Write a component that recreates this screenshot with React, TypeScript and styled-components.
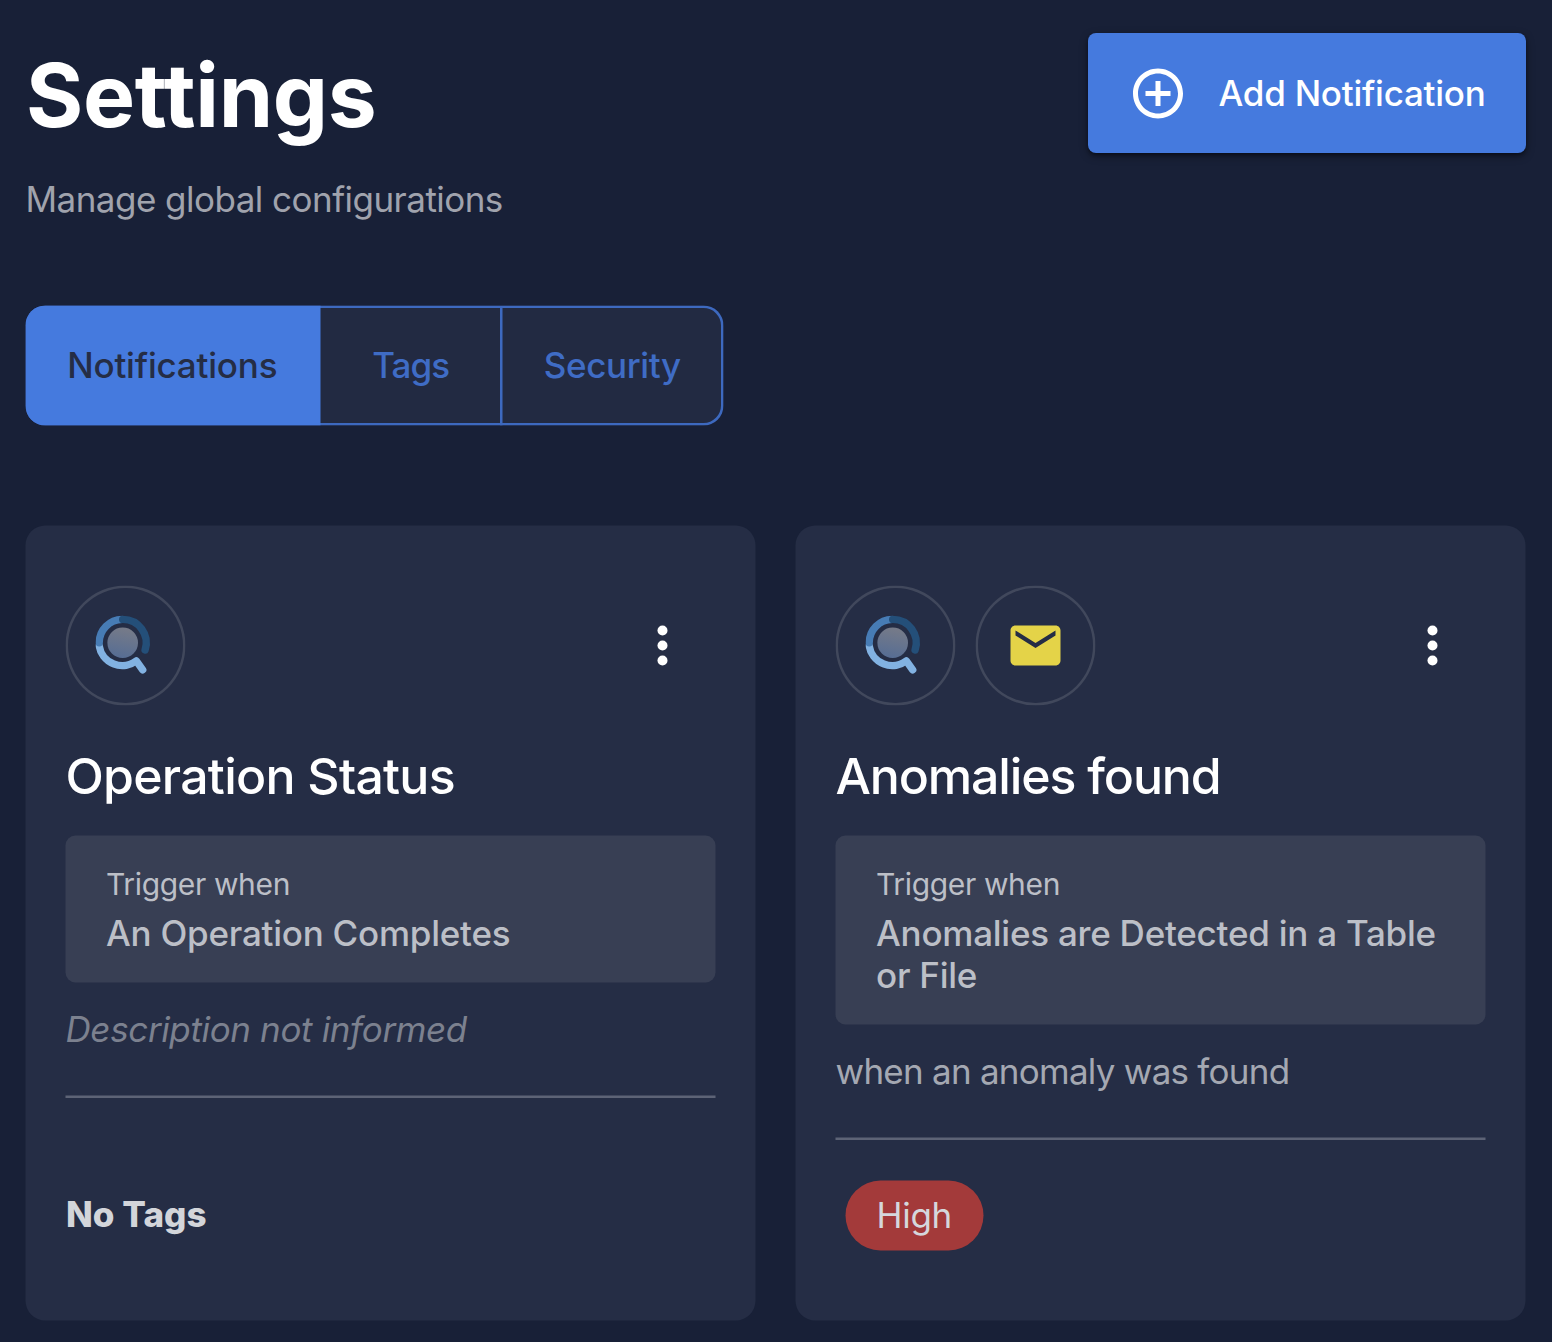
import React from 'react';
import styled, { createGlobalStyle } from 'styled-components';

const GlobalStyle = createGlobalStyle`
  *, *::before, *::after { box-sizing: border-box; }
  html, body { margin: 0; background: #182037; }
  body { font-family: Inter, "Liberation Sans", sans-serif; color: #fff; overflow: hidden; }
  button { font: inherit; margin: 0; cursor: pointer; }
  h1, h2, p { margin: 0; }
`;

const Page = styled.main`
  width: 1552px;
  height: 1342px;
  padding: 33px 26px 0;
  overflow: hidden;
`;

const Header = styled.header`
  display: flex;
  justify-content: space-between;
  align-items: flex-start;
  height: 273px;
`;

const Title = styled.h1`
  padding-top: 10px;
  font-size: 87.5px;
  line-height: 104px;
  font-weight: 700;
  letter-spacing: -0.3px;
  white-space: nowrap;
`;

const Subtitle = styled.p`
  padding-top: 31px;
  margin-left: -0.5px;
  font-size: 35px;
  line-height: 42px;
  letter-spacing: -0.53px;
  color: #a0a3ad;
`;

const AddButton = styled.button`
  display: flex;
  align-items: center;
  gap: 30.5px;
  width: 438px;
  height: 120px;
  padding: 0 0 0 40px;
  border: 0;
  border-radius: 8px;
  background: #457ade;
  color: #fff;
  font-size: 35px;
  font-weight: 500;
  letter-spacing: -0.25px;
  white-space: nowrap;
  box-shadow: 0 3px 8px rgba(0, 0, 0, 0.4), 0 2px 3px rgba(0, 0, 0, 0.3);
`;

const Tabs = styled.nav`
  display: flex;
  width: 697.5px;
  height: 120px;
  overflow: hidden;
  border-radius: 20px;
  background: #222a42;
  box-shadow: inset 0 0 0 2.5px #3d69bf;
  transform: translate(-0.5px, -0.5px);
`;

const Tab = styled.button<{ $width: number; $tracking: number; $active?: boolean; $divided?: boolean }>`
  width: ${(p) => p.$width}px;
  padding: 0 1px 2px 0;
  border: 0;
  font-size: 35px;
  font-weight: 500;
  letter-spacing: ${(p) => p.$tracking}px;
  background: ${(p) => (p.$active ? '#457ade' : 'transparent')};
  color: ${(p) => (p.$active ? '#252d45' : '#3f6cc5')};
  box-shadow: ${(p) => (p.$divided ? 'inset -2.5px 0 0 #3d69bf' : 'none')};
`;

const Cards = styled.section`
  display: grid;
  grid-template-columns: repeat(2, 730px);
  gap: 40px;
  margin-top: 100px;
  transform: translate(-0.5px, -0.5px);
`;

const Card = styled.article`
  height: 795px;
  padding: 60px 40px 0;
  border-radius: 20px;
  background: #252d45;
`;

const CardTop = styled.div`
  display: flex;
  align-items: center;
  justify-content: space-between;
  height: 120px;
  padding-right: 23px;
`;

const Channels = styled.div`
  display: flex;
  gap: 20px;
`;

const Channel = styled.div`
  display: grid;
  place-items: center;
  width: 120px;
  height: 120px;
  border-radius: 50%;
  box-shadow: inset 0 0 0 2.5px #41485c;
`;

const MenuButton = styled.button`
  display: grid;
  place-items: center;
  width: 60px;
  height: 60px;
  padding: 0;
  border: 0;
  background: none;
  color: #fff;
`;

const CardTitle = styled.h2<{ $tracking: number }>`
  margin-top: 40px;
  font-size: 50px;
  line-height: 60px;
  font-weight: 500;
  letter-spacing: ${(p) => p.$tracking}px;
  white-space: nowrap;
`;

const Trigger = styled.div`
  margin-top: 30px;
  padding: 30px 20px 29px 40.5px;
  border-radius: 10px;
  background: #383f54;
  color: #bcbfc7;
`;

const TriggerLabel = styled.p`
  font-size: 30px;
  line-height: 36px;
  letter-spacing: -0.35px;
`;

const TriggerValue = styled.p`
  padding-top: 10px;
  font-size: 35px;
  line-height: 42px;
  font-weight: 500;
  letter-spacing: -0.24px;
`;

const Description = styled.p<{ $empty?: boolean }>`
  margin-top: 25px;
  padding-bottom: 46px;
  font-size: 35px;
  line-height: 42px;
  letter-spacing: ${(p) => (p.$empty ? -0.37 : -0.75)}px;
  font-style: ${(p) => (p.$empty ? 'italic' : 'normal')};
  color: ${(p) => (p.$empty ? '#7c818f' : '#a4a8b2')};
`;

const Divider = styled.div`
  height: 3px;
  background: linear-gradient(#5d6376 2.5px, transparent 2.5px);
`;

const NoTags = styled.p`
  margin-top: 94px;
  padding-left: 0.5px;
  font-size: 35px;
  line-height: 42px;
  font-weight: 800;
  letter-spacing: 0.05px;
  color: #d3d5da;
`;

const Chip = styled.span`
  display: flex;
  align-items: center;
  justify-content: center;
  width: 137.5px;
  height: 70px;
  padding-bottom: 2px;
  margin: 40px 0 0 10px;
  border-radius: 35px;
  background: #a33a3a;
  color: #d5d7dc;
  font-size: 35px;
  letter-spacing: -0.3px;
`;

const AddIcon = () => (
  <svg width="60" height="60" viewBox="0 -0.2 24 24" fill="currentColor" aria-hidden="true">
    <path d="M13 7h-2v4H7v2h4v4h2v-4h4v-2h-4V7zm-1-5C6.48 2 2 6.48 2 12s4.48 10 10 10 10-4.48 10-10S17.52 2 12 2zm0 18c-4.41 0-8-3.59-8-8s3.59-8 8-8 8 3.59 8 8-3.59 8-8 8z" />
  </svg>
);

const MailIcon = () => (
  <svg width="60" height="60" viewBox="0 0 24 24" fill="#e4d348" aria-hidden="true">
    <path d="M20 4H4c-1.100 0-1.990.9-1.990 2L2 18c0 1.100.9 2 2 2h16c1.100 0 2-.9 2-2V6c0-1.100-.9-2-2-2zm0 4l-8 5-8-5V6l8 5 8-5v2z" />
  </svg>
);

const MoreIcon = () => (
  <svg width="60" height="60" viewBox="0 0 24 24" fill="currentColor" aria-hidden="true">
    <circle cx="12" cy="6" r="2" />
    <circle cx="12" cy="12" r="2" />
    <circle cx="12" cy="18" r="2" />
  </svg>
);

const LogoIcon = () => (
  <svg width="60" height="60" viewBox="0 0 60 60" fill="none" strokeWidth="7.4" strokeLinecap="round" strokeLinejoin="round" aria-hidden="true">
    <defs>
      <linearGradient id="lens" x1="0.6" y1="0" x2="0.4" y2="1">
        <stop offset="0" stopColor="#777b88" />
        <stop offset="1" stopColor="#566d94" />
      </linearGradient>
    </defs>
    <circle cx="27.200" cy="27.300" r="15.300" fill="url(#lens)" />
    <path d="M3.700 30.500A23.400 23.400 0 0 0 40.800 45.400L47.200 54.300" stroke="#82b2e2" />
    <path d="M3.700 27.300A23.400 23.400 0 0 1 26.800 3.900" stroke="#477cb5" />
    <path d="M27.200 3.900A23.400 23.400 0 0 1 49.600 34.500" stroke="#244f79" />
  </svg>
);

type Notification = {
  title: string;
  tracking: number;
  email?: boolean;
  trigger: string;
  description?: string;
  tag?: string;
};

const notifications: Notification[] = [
  { title: 'Operation Status', tracking: -0.75, trigger: 'An Operation Completes' },
  {
    title: 'Anomalies found',
    tracking: -1.15,
    email: true,
    trigger: 'Anomalies are Detected in a Table or File',
    description: 'when an anomaly was found',
    tag: 'High',
  },
];

const NotificationCard = ({ title, tracking, email, trigger, description, tag }: Notification) => (
  <Card>
    <CardTop>
      <Channels>
        <Channel><LogoIcon /></Channel>
        {email && <Channel><MailIcon /></Channel>}
      </Channels>
      <MenuButton aria-label="More options"><MoreIcon /></MenuButton>
    </CardTop>
    <CardTitle $tracking={tracking}>{title}</CardTitle>
    <Trigger>
      <TriggerLabel>Trigger when</TriggerLabel>
      <TriggerValue>{trigger}</TriggerValue>
    </Trigger>
    <Description $empty={!description}>{description ?? 'Description not informed'}</Description>
    <Divider />
    {tag ? <Chip>{tag}</Chip> : <NoTags>No Tags</NoTags>}
  </Card>
);

export default function App() {
  return (
    <>
      <GlobalStyle />
      <Page>
        <Header>
          <div>
            <Title>Settings</Title>
            <Subtitle>Manage global configurations</Subtitle>
          </div>
          <AddButton>
            <AddIcon />
            Add Notification
          </AddButton>
        </Header>
        <Tabs>
          <Tab $width={294.5} $tracking={-0.2} $active>Notifications</Tab>
          <Tab $width={182.5} $tracking={-0.9} $divided>Tags</Tab>
          <Tab $width={220.5} $tracking={-0.4}>Security</Tab>
        </Tabs>
        <Cards>
          {notifications.map((n) => (
            <NotificationCard key={n.title} {...n} />
          ))}
        </Cards>
      </Page>
    </>
  );
}
